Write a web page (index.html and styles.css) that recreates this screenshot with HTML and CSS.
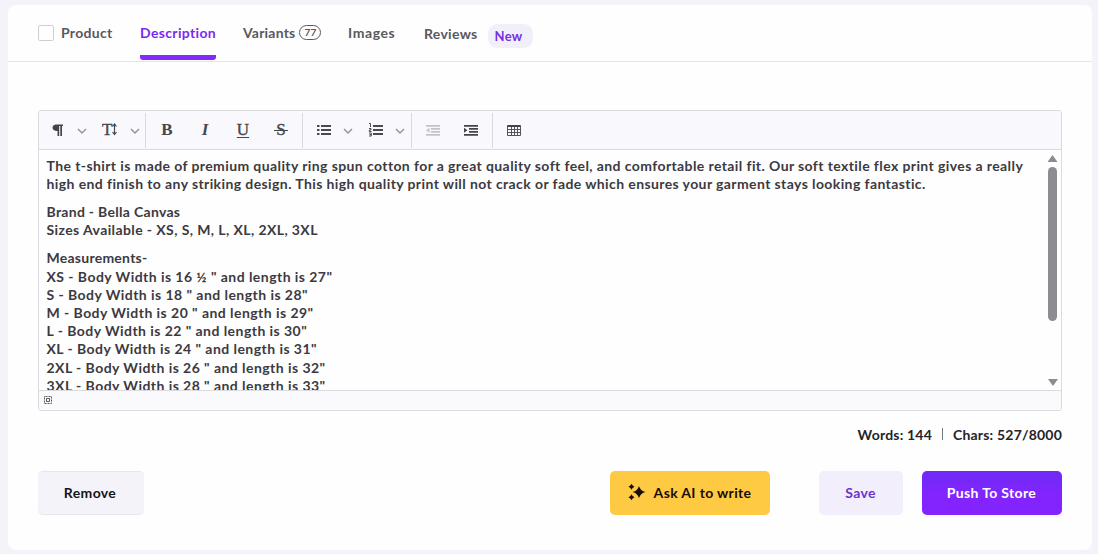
FILE: index.html
```html
<!DOCTYPE html>
<html lang="en">
<head>
<meta charset="utf-8">
<title>Product description</title>
<link rel="stylesheet" href="styles.css">
</head>
<body>
<main class="card">
  <nav class="tabs">
    <label class="tab tab-product"><span class="checkbox"></span><span class="label">Product</span></label>
    <a class="tab tab-description active"><span class="label">Description</span></a>
    <a class="tab tab-variants"><span class="label">Variants</span><span class="count">77</span></a>
    <a class="tab tab-images"><span class="label">Images</span></a>
    <a class="tab tab-reviews"><span class="label">Reviews</span><span class="new">New</span></a>
  </nav>
  <section class="editor">
    <div class="toolbar">
      <div class="group group-format">
        <svg class="icon" viewBox="0 0 16 16"><path fill="#444" d="M6 2.500h7v1.500h-1V14h-1.700V4H9.200V14H7.500V9C4 9 2.500 7.600 2.500 5.700S4 2.500 6 2.500z"/></svg>
        <svg class="chevron" viewBox="0 0 10 6"><path d="M1 1l4 4 4-4"/></svg>
        <span class="glyph size">T<svg viewBox="0 0 5 13"><path d="M2.500 1v10.500M.5 3.500l2-2.500 2 2.500M.5 9l2 2.500 2-2.500"/></svg></span>
        <svg class="chevron" viewBox="0 0 10 6"><path d="M1 1l4 4 4-4"/></svg>
      </div>
      <div class="group group-style">
        <span class="glyph bold">B</span><span class="glyph italic">I</span><span class="glyph underline">U</span><span class="glyph strike">S</span>
      </div>
      <div class="group group-list">
        <svg class="icon" viewBox="0 0 16 16" fill="#4a4a4d"><path d="M5 3h10v2H5zM5 7h10v2H5zM5 11h10v2H5zM1 3h2.500v2H1zM1 7h2.500v2H1zM1 11h2.500v2H1z"/></svg>
        <svg class="chevron" viewBox="0 0 10 6"><path d="M1 1l4 4 4-4"/></svg>
        <svg class="icon" viewBox="0 0 16 16" fill="#4a4a4d"><path d="M5 3h10v2H5zM5 7h10v2H5zM5 11h10v2H5z"/><path fill="none" stroke="#4a4a4d" d="M1 1.500h1.500v3.500M1 6.500h2v1.500H1.300v1.500H3.500M1 11h2.300v3H1M1.500 12.500h1.500"/></svg>
        <svg class="chevron" viewBox="0 0 10 6"><path d="M1 1l4 4 4-4"/></svg>
      </div>
      <div class="group group-indent">
        <svg class="icon" viewBox="0 0 16 16" fill="#c4c3c8"><path d="M1 3h14v1.700H1zM6 6h9v1.700H6zM6 9h9v1.700H6zM1 12h14v1.700H1zM4.500 5.700v5L1 8.200z"/></svg>
        <svg class="icon" viewBox="0 0 16 16" fill="#444447"><path d="M1 3h14v1.700H1zM6 6h9v1.700H6zM6 9h9v1.700H6zM1 12h14v1.700H1zM1 5.700v5l3.500-2.500z"/></svg>
      </div>
      <div class="group group-table">
        <svg class="icon" viewBox="0 0 16 16" fill="none" stroke="#555558"><path d="M1.500 3.500v10h13V3.500M5.500 3v10M8.500 3v10M11.500 3v10M1 7.500h14M1 10.500h14"/><path stroke="#444447" stroke-width="2" d="M1.500 4h13"/></svg>
      </div>
    </div>
    <div class="body">
      <div class="content">
        <p><span class="line intro">The t-shirt is made of premium quality ring spun cotton for a great quality soft feel, and comfortable retail fit. Our soft textile flex print gives a really</span>
        <span class="line intro">high end finish to any striking design. This high quality print will not crack or fade which ensures your garment stays looking fantastic.</span></p>
        <p><span class="line">Brand - Bella Canvas</span><span class="line intro">Sizes Available - XS, S, M, L, XL, 2XL, 3XL</span></p>
        <p class="sizes"><span class="line heading">Measurements-</span><span class="line">XS - Body Width is 16 ½ " and length is 27"</span><span class="line">S - Body Width is 18 " and length is 28"</span><span class="line">M - Body Width is 20 " and length is 29"</span><span class="line">L - Body Width is 22 " and length is 30"</span><span class="line">XL - Body Width is 24 " and length is 31"</span><span class="line">2XL - Body Width is 26 " and length is 32"</span><span class="line">3XL - Body Width is 28 " and length is 33"</span></p>
      </div>
      <div class="scrollbar"><i class="up"></i><i class="thumb"></i><i class="down"></i></div>
    </div>
    <div class="status"><svg viewBox="0 0 8 8"><path d="M.500.500h7v7h-7z" stroke-dasharray="1 .5"/><path d="M2.500 2.500h3v3h-3z"/></svg></div>
  </section>
  <div class="counts"><span>Words: 144</span><i></i><span>Chars: 527/8000</span></div>
  <footer class="actions">
    <button class="btn remove">Remove</button>
    <button class="btn ask"><svg viewBox="0 0 18 18"><path d="M11 3q1.300 4.800 6.500 6.100Q12.300 10.400 11 15.200 9.700 10.400 4.500 9.100 9.700 7.800 11 3zM3.500.700q.8 2.200 3 3Q4.300 4.500 3.500 6.700 2.700 4.500.5 3.700 2.700 2.900 3.500.700zM3.500 11.300q.8 2.200 3 3-2.200.8-3 3-.8-2.200-3-3 2.200-.8 3-3z"/></svg>Ask AI to write</button>
    <button class="btn save">Save</button>
    <button class="btn push">Push To Store</button>
  </footer>
</main>
</body>
</html>
```
FILE: styles.css
```css
* { box-sizing: border-box; }
body { margin: 0; padding: 5px 6px 4px 8px; height: 554px; background: #f4f3fa; font-family: Lato, "Open Sans", sans-serif; font-weight: 700; font-size: 14px; color: #3c3a40; overflow: hidden; }
.card { height: 545px; border-radius: 8px; background: #fefefe; }
.tabs { display: flex; height: 57px; padding-left: 30px; border-bottom: 1px solid #e5e5ea; color: #59595f; }
.tab { display: flex; align-items: center; height: 56px; letter-spacing: .3px; white-space: nowrap; }
.tab-product { width: 102px; gap: 7px; }
.tab-product .label { margin-bottom: 1px; }
.checkbox { width: 16px; height: 16px; border: 1px solid #cfcfd2; border-radius: 2px; }
.tab-description { width: 76px; margin-right: 27px; letter-spacing: .35px; }
.active { color: #7929f5; border-bottom: 5px solid #8528fb; border-radius: 0 0 3px 3px; height: 55px; padding-top: 5px; }
.tab-variants { width: 105px; gap: 4px; height: 55px; letter-spacing: .2px; }
.count { width: 22px; height: 15px; border: 1px solid #59595f; border-radius: 8px; font-size: 10px; line-height: 13px; text-align: center; letter-spacing: 0; }
.tab-images { width: 76px; height: 55px; letter-spacing: .6px; }
.tab-reviews { gap: 10px; }
.new { width: 45px; height: 24px; margin-top: 5px; border-radius: 9px; background: #f1eff9; color: #7431df; font-size: 13px; line-height: 24px; text-align: center; padding-right: 3px; }
.editor { width: 1024px; height: 301px; margin: 48px 0 0 30px; border: 1px solid #dbdade; border-radius: 3px; overflow: hidden; }
.toolbar { display: flex; height: 39px; padding-top: 2px; background: #f9f8fd; border-bottom: 1px solid #dbdade; }
.group { display: flex; align-items: center; height: 35px; padding-bottom: 2px; border-right: 1px solid #dbdade; }
.group-format { width: 107px; padding-left: 11px; gap: 12px; }
.group-format > :nth-child(3) { margin-left: 4px; }
.group-format > :nth-child(4) { margin-left: -1px; }
.group-style { width: 157px; padding-left: 11px; gap: 18px; }
.group-list { width: 109px; padding-left: 13px; gap: 12px; }
.group-indent { width: 81px; padding-left: 13px; gap: 22px; }
.group-table { padding-left: 13px; border: 0; }
.icon { width: 16px; height: 16px; flex: none; }
.chevron { width: 10px; height: 6px; flex: none; margin: 3px -1px 0; fill: none; stroke: #929197; stroke-width: 1.4; }
.group-list .icon + .chevron { margin-right: 3px; }
.glyph { width: 20px; color: #48484b; font: 700 17px/20px "Liberation Serif", serif; text-align: center; }
.size { display: flex; align-items: center; width: 17px; font-weight: 400; -webkit-text-stroke: .4px #48484b; }
.size svg { width: 5px; height: 13px; fill: none; stroke: #48484b; stroke-width: 1.2; }
.italic { font-style: italic; }
.underline, .strike { font-weight: 400; -webkit-text-stroke: .4px #48484b; }
.underline { text-decoration: underline; text-underline-offset: 2px; }
.strike { position: relative; }
.strike::after { content: ""; position: absolute; left: 3px; top: 10px; width: 14px; height: 1px; background: #48484b; }
.body { display: flex; height: 240px; background: #fefeff; overflow: hidden; }
.content { flex: 1; padding: 7px 0 0 7.5px; line-height: 18.2px; letter-spacing: .3px; }
.content p { margin: 0 0 9.8px; }
.line { display: block; white-space: nowrap; }
.intro { letter-spacing: .4px; }
.sizes { letter-spacing: .45px; }
.heading { letter-spacing: .25px; }
.scrollbar { display: flex; flex-direction: column; align-items: center; width: 17px; padding-top: 5px; }
.up, .down { width: 10px; height: 7px; background: #8d8c92; clip-path: polygon(50% 0, 100% 100%, 0 100%); }
.thumb { width: 9px; height: 154px; margin: 5px 0 58px; border-radius: 5px; background: #8d8c92; }
.down { transform: rotate(180deg); }
.status { height: 20px; padding: 5px 0 0 5px; border-top: 1px solid #dbdade; background: #fafafd; }
.status svg { display: block; width: 8px; height: 8px; fill: none; stroke: #56565a; }
.counts { display: flex; align-items: center; justify-content: flex-end; height: 20px; margin: 13px 30px 0 0; color: #242329; letter-spacing: .2px; }
.counts i { width: 1px; height: 12px; margin: 0 10px; background: #77767b; }
.actions { display: flex; height: 44px; margin: 27px 30px 0; }
.btn { display: flex; align-items: center; justify-content: center; height: 44px; padding: 0 1px 2px 0; border: 0; border-radius: 5px; font: inherit; letter-spacing: .35px; white-space: nowrap; }
.remove { width: 106px; margin-right: auto; background: #f3f3f9; color: #15151a; border-top: 1px solid #e7e7eb; border-bottom: 1px solid #e7e7eb; padding-right: 2px; }
.ask { width: 160px; gap: 8px; background: #ffca43; color: #180c0a; }
.ask svg { width: 18px; height: 18px; fill: #180c0a; }
.save { width: 84px; margin: 0 19px 0 49px; background: #f2eefc; color: #6d34cf; }
.push { width: 140px; background: linear-gradient(#702af5, #8324ff 60%); color: #fff; }
```
